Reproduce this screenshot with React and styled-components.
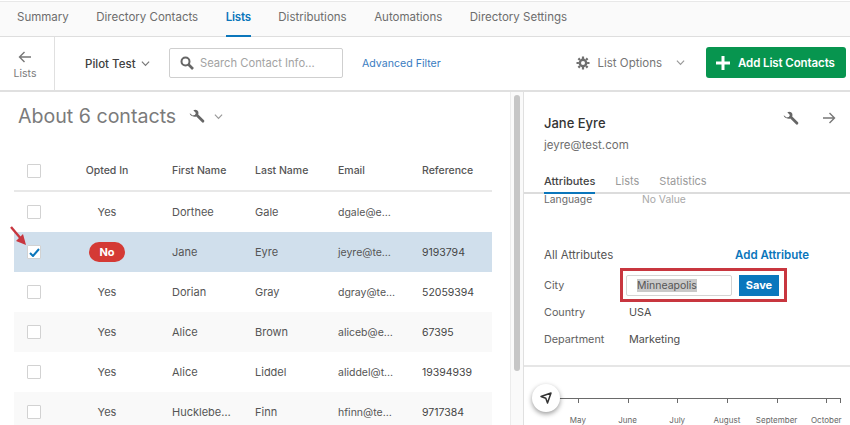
import React from 'react'
import styled, { createGlobalStyle } from 'styled-components'

const GlobalStyle = createGlobalStyle`
    html, body {
        margin: 0;
        padding: 0;
        height: 100%;
        background: #fff;
        overflow: hidden;
    }
    body {
        font-family: "Inter", "Noto Sans", sans-serif;
        color: #525252;
    }
    * {
        box-sizing: border-box;
    }
`;

const Page = styled.div`
    width: 850px;
    height: 425px;
    overflow: hidden;
    display: flex;
    flex-direction: column;
`;

const TabBar = styled.nav`
    flex: none;
    height: 36px;
    margin-top: 1px;
    padding-left: 17px;
    display: flex;
    gap: 27.5px;
    background: #fafafa;
    border-top: 1px solid #e8e8e8;
    border-bottom: 1px solid #dedede;
`;

const Tab = styled.a`
    display: flex;
    align-items: center;
    height: 35px;
    padding-bottom: 3px;
    font-size: 11.5px;
    letter-spacing: ${p => (p.$active ? '-0.2px' : '0')};
    color: ${p => (p.$active ? '#0b76bb' : '#6d6d6d')};
    font-weight: ${p => (p.$active ? 600 : 400)};
    border-bottom: 2px solid ${p => (p.$active ? '#0b76bb' : 'transparent')};
`;

const Toolbar = styled.div`
    flex: none;
    height: 55px;
    display: flex;
    align-items: center;
    border-bottom: 2px solid #e0e0e0;
`;

const BackCell = styled.div`
    width: 55px;
    height: 100%;
    flex: none;
    display: flex;
    flex-direction: column;
    align-items: center;
    padding: 13px 4px 0 0;
    gap: 3px;
    font-size: 10.5px;
    color: #7a7a7a;
    border-right: 1px solid #e0e0e0;
`;

const ListPicker = styled.div`
    margin-left: 30px;
    width: 84px;
    display: flex;
    align-items: center;
    gap: 5px;
    font-size: 11.5px;
    color: #404040;
    font-weight: 500;
    svg {
        flex: none;
    }
`;

const SearchBox = styled.div`
    width: 174px;
    height: 30px;
    margin-top: -1px;
    padding-left: 10px;
    display: flex;
    align-items: center;
    gap: 6px;
    font-size: 11.2px;
    color: #a3a3a3;
    border: 1px solid #cfcfcf;
    border-radius: 2px;
`;

const FilterLink = styled.a`
    margin-left: 19px;
    font-size: 10.6px;
    color: #3a7cc1;
`;

const OptionsMenu = styled.div`
    margin-left: auto;
    display: flex;
    align-items: center;
    font-size: 11.5px;
    color: #757575;
    margin-top: -2px;
    span {
        margin: 0 14px 0 8px;
    }
`;

const AddButton = styled.button`
    margin: -2px 4px 0 21px;
    width: 140px;
    height: 31px;
    padding: 0 0 0 10px;
    display: flex;
    align-items: center;
    gap: 8px;
    font: 600 11.5px "Inter", sans-serif;
    letter-spacing: -0.1px;
    color: #fff;
    background: #07954f;
    border: none;
    border-radius: 3px;
`;

const Workspace = styled.div`
    flex: 1;
    min-height: 0;
    display: flex;
`;

const ListPane = styled.section`
    position: relative;
    width: 510px;
    flex: none;
    overflow: hidden;
    padding: 0 18px 0 14px;
`;

const Heading = styled.div`
    height: 48px;
    margin-bottom: 11px;
    padding-left: 4px;
    display: flex;
    align-items: center;
    font-size: 19.6px;
    color: #7b7b7b;
    svg:first-of-type {
        margin-left: 13px;
    }
    svg:last-of-type {
        margin-left: 9px;
    }
`;

const Row = styled.div`
    display: grid;
    grid-template-columns: 40px 106px 83px 83px 84px 1fr;
    align-items: center;
    height: ${p => (p.$head ? '41px' : '40px')};
    font-size: ${p => (p.$head ? '10.5px' : '11px')};
    color: #555;
    font-weight: ${p => (p.$head ? 500 : 400)};
    background: ${p => p.$bg || 'transparent'};
    border-bottom: ${p => (p.$head ? '2px solid #e8e8e8' : 'none')};
`;

const Cell = styled.div`
    padding-left: 12px;
    white-space: nowrap;
    color: ${p => (p.$dark ? '#444' : 'inherit')};
    font-size: ${p => (p.$small ? '10.5px' : 'inherit')};
`;

const CenterCell = styled.div`
    display: flex;
    justify-content: center;
`;

const Check = styled.span`
    width: 14px;
    height: 14px;
    display: flex;
    align-items: center;
    justify-content: center;
    background: #fff;
    border: 1px solid #d2d2d2;
    border-radius: 1px;
`;

const NoPill = styled.span`
    width: 36px;
    height: 20px;
    display: flex;
    align-items: center;
    justify-content: center;
    font-size: 11px;
    font-weight: 700;
    color: #fff;
    background: #d43a35;
    border-radius: 10px;
`;

const RedArrow = styled.svg`
    position: absolute;
    left: 9px;
    top: 133px;
`;

const ScrollTrack = styled.div`
    width: 14px;
    flex: none;
    padding: 3px 3px 0 3px;
    background: #fafafa;
    border-left: 1px solid #ececec;
    border-right: 1px solid #e0e0e0;
`;

const ScrollThumb = styled.div`
    height: 276px;
    background: #c6c6c6;
    border-radius: 4px;
`;

const DetailPane = styled.aside`
    flex: 1;
    min-width: 0;
    display: flex;
    flex-direction: column;
    overflow: hidden;
`;

const DetailHead = styled.header`
    flex: none;
    height: 102px;
    padding: 22px 0 0 20px;
    position: relative;
    border-bottom: 2px solid #dcdcdc;
`;

const ContactName = styled.h2`
    margin: 0 0 5px;
    font-size: 13px;
    line-height: 18px;
    font-weight: 500;
    color: #333;
`;

const ContactMail = styled.div`
    font-size: 11.5px;
    line-height: 16px;
    color: #6e6e6e;
`;

const HeadActions = styled.div`
    position: absolute;
    top: 18px;
    right: 14px;
    display: flex;
    gap: 23px;
    align-items: center;
`;

const DetailTabs = styled.div`
    margin-top: 20px;
    display: flex;
    gap: 20px;
`;

const DetailTab = styled.a`
    height: 21px;
    font-size: 11px;
    line-height: 16px;
    color: ${p => (p.$active ? '#444' : '#9a9a9a')};
    font-weight: ${p => (p.$active ? 500 : 400)};
    border-bottom: 2px solid ${p => (p.$active ? '#0b76bb' : 'transparent')};
`;

const Attributes = styled.div`
    flex: none;
    height: 173px;
    overflow: hidden;
    padding: 0 21px 0 20px;
    border-bottom: 2px solid #e6e6e6;
`;

const ClippedRow = styled.div`
    margin-top: -3px;
    height: 16px;
    display: flex;
    font-size: 10.3px;
    line-height: 16px;
    color: #6a6a6a;
    span:first-child {
        width: 98px;
    }
    span:last-child {
        color: #a8a8a8;
    }
`;

const AttrHead = styled.div`
    margin-top: 40px;
    height: 16px;
    display: flex;
    justify-content: space-between;
    align-items: center;
    font-size: 11.5px;
    color: #555;
    padding-right: 20px;
    a {
        font-weight: 600;
        color: #0b76bb;
    }
`;

const AttrRow = styled.div`
    display: flex;
    align-items: center;
    font-size: 10.8px;
    height: ${p => (p.$edit ? '28px' : '27px')};
    margin-top: ${p => (p.$edit ? '8px' : '0')};
    color: #616161;
    b {
        font-weight: 400;
        color: #4d4d4d;
    }
`;

const AttrLabel = styled.div`
    width: ${p => p.$w || '85px'};
    flex: none;
`;

const EditBox = styled.div`
    display: flex;
    align-items: center;
    gap: 7px;
    width: 167px;
    height: 34px;
    flex: none;
    padding-left: 3px;
    border: 3px solid #c8363f;
`;

const EditInput = styled.div`
    width: 106px;
    height: 21px;
    padding-left: 10px;
    display: flex;
    align-items: center;
    font-size: 10.5px;
    border: 1px solid #d4d4d4;
    border-radius: 2px;
    span {
        background: #c9c9c9;
        color: #555;
    }
`;

const SaveButton = styled.button`
    width: 40px;
    height: 21px;
    padding: 0;
    font: 700 11px "Inter", sans-serif;
    color: #fff;
    background: #0a77bd;
    border: none;
`;

const Timeline = styled.div`
    position: relative;
    flex: 1;
    padding: 31px 0 0 29px;
`;

const CompassButton = styled.div`
    position: absolute;
    z-index: 1;
    left: 8px;
    top: 17px;
    width: 28px;
    height: 28px;
    display: flex;
    align-items: center;
    justify-content: center;
    background: #fff;
    border-radius: 50%;
    box-shadow: 0 2px 5px rgba(0, 0, 0, 0.4);
`;

const MonthAxis = styled.div`
    position: relative;
    display: flex;
    width: 288px;
    border-top: 1px solid #6a6a6a;
    &::after {
        content: '';
        position: absolute;
        top: 0;
        right: 0;
        width: 1px;
        height: 4px;
        background: #6a6a6a;
    }
`;

const Month = styled.div`
    position: relative;
    width: 49.7px;
    flex: none;
    padding-top: 16px;
    text-align: center;
    font-size: 8px;
    color: #666;
    white-space: nowrap;
    &::before {
        content: '';
        position: absolute;
        top: 0;
        left: 50%;
        width: 1px;
        height: 4px;
        background: #6a6a6a;
    }
`;

const Chevron = ({ color = '#777', size = 9 }) => (
    <svg width={size} height={size} viewBox="0 0 10 10" fill="none" stroke={color} strokeWidth="1.3">
        <path d="M1 3l4 4 4-4" />
    </svg>
)

const WrenchIcon = () => (
    <svg width="16" height="16" viewBox="0 0 16 16" fill="#666">
        <path d="M.8 5.2 3.6 7.4 5.9 7 6.9 4.9 4.3 2.3C6 1.2 8.6 1.7 9.3 3.8c.3 1 .2 1.9-.1 2.7l5.6 5.6c.7.7.7 1.5.1 2.1-.6.6-1.5.6-2.1-.1L7.3 8.5C6 9 4.4 8.8 3 8 1.6 7.1.6 6.3.8 5.2z" />
    </svg>
)

const ArrowIcon = ({ left, size = 14 }) => (
    <svg width={size} height={size} viewBox="0 0 14 14" fill="none" stroke="#777" strokeWidth="1.4">
        {left ? <path d="M13 7H1.5M6.5 2 1.5 7l5 5" /> : <path d="M1 7h11.5M7.5 2l5 5-5 5" />}
    </svg>
)

const SearchIcon = () => (
    <svg width="14" height="14" viewBox="0 0 14 14" fill="none" stroke="#666">
        <circle cx="5.5" cy="5.5" r="4" strokeWidth="2" />
        <path d="M8.5 8.5 13 13" strokeWidth="2.6" />
    </svg>
)

const GearIcon = () => (
    <svg width="14" height="14" viewBox="0 0 14 14" fill="none" stroke="#6f6f6f">
        <circle cx="7" cy="7" r="3.2" strokeWidth="2.4" />
        <path d="M7 .5v2.4M7 11.1v2.4M.5 7h2.4M11.1 7h2.4M2.4 2.4 4 4M10 10l1.6 1.6M11.6 2.4 10 4M4 10l-1.6 1.6" strokeWidth="2.2" />
    </svg>
)

const PlusIcon = () => (
    <svg width="14" height="14" viewBox="0 0 14 14" stroke="#fff" strokeWidth="3">
        <path d="M7 0v14M0 7h14" />
    </svg>
)

const CheckMark = () => (
    <svg width="11" height="9" viewBox="0 0 11 9" fill="none" stroke="#0b76bb" strokeWidth="2">
        <path d="M1 5l3 3 6-7" />
    </svg>
)

const CompassIcon = () => (
    <svg width="12" height="12" viewBox="0 0 12 12" fill="none" stroke="#333" strokeWidth="1.5" strokeLinejoin="round">
        <path d="M1 4.5 11 1 7.5 11 5.8 6.2z" />
    </svg>
)

const tabs = ['Summary', 'Directory Contacts', 'Lists', 'Distributions', 'Automations', 'Directory Settings']

const contacts = [
    { opted: 'Yes', first: 'Dorthee', last: 'Gale', email: 'dgale@e…', ref: '' },
    { opted: 'No', first: 'Jane', last: 'Eyre', email: 'jeyre@te…', ref: '9193794', bg: '#d0dfec', checked: true },
    { opted: 'Yes', first: 'Dorian', last: 'Gray', email: 'dgray@te…', ref: '52059394' },
    { opted: 'Yes', first: 'Alice', last: 'Brown', email: 'aliceb@e…', ref: '67395', bg: '#f9f9f9' },
    { opted: 'Yes', first: 'Alice', last: 'Liddel', email: 'aliddel@t…', ref: '19394939' },
    { opted: 'Yes', first: 'Hucklebe…', last: 'Finn', email: 'hfinn@te…', ref: '9717384', bg: '#f9f9f9' },
]

const months = ['May', 'June', 'July', 'August', 'September', 'October']

function App() {
    return (
        <Page>
            <GlobalStyle />
            <TabBar>
                {tabs.map(t => <Tab key={t} $active={t === 'Lists'}>{t}</Tab>)}
            </TabBar>
            <Toolbar>
                <BackCell>
                    <ArrowIcon left />
                    Lists
                </BackCell>
                <ListPicker>Pilot Test <Chevron /></ListPicker>
                <SearchBox><SearchIcon /> Search Contact Info...</SearchBox>
                <FilterLink>Advanced Filter</FilterLink>
                <OptionsMenu>
                    <GearIcon />
                    <span>List Options</span>
                    <Chevron color="#999" />
                </OptionsMenu>
                <AddButton><PlusIcon /> Add List Contacts</AddButton>
            </Toolbar>
            <Workspace>
                <ListPane>
                    <Heading>About 6 contacts <WrenchIcon /> <Chevron color="#999" /></Heading>
                    <Row $head>
                        <CenterCell><Check /></CenterCell>
                        <CenterCell>Opted In</CenterCell>
                        <Cell>First Name</Cell>
                        <Cell>Last Name</Cell>
                        <Cell>Email</Cell>
                        <Cell>Reference</Cell>
                    </Row>
                    {contacts.map(c => (
                        <Row key={c.email} $bg={c.bg}>
                            <CenterCell><Check>{c.checked && <CheckMark />}</Check></CenterCell>
                            <CenterCell>{c.opted === 'No' ? <NoPill>No</NoPill> : c.opted}</CenterCell>
                            <Cell>{c.first}</Cell>
                            <Cell>{c.last}</Cell>
                            <Cell $small>{c.email}</Cell>
                            <Cell $dark $small>{c.ref}</Cell>
                        </Row>
                    ))}
                    <RedArrow width="20" height="22" viewBox="0 0 20 22">
                        <path d="M2 2 13 15" stroke="#c8363f" strokeWidth="2.4" />
                        <path d="M17 20 7 16 14 9z" fill="#c8363f" />
                    </RedArrow>
                </ListPane>
                <ScrollTrack><ScrollThumb /></ScrollTrack>
                <DetailPane>
                    <DetailHead>
                        <ContactName>Jane Eyre</ContactName>
                        <ContactMail>jeyre@test.com</ContactMail>
                        <HeadActions><WrenchIcon /> <ArrowIcon /></HeadActions>
                        <DetailTabs>
                            <DetailTab $active>Attributes</DetailTab>
                            <DetailTab>Lists</DetailTab>
                            <DetailTab>Statistics</DetailTab>
                        </DetailTabs>
                    </DetailHead>
                    <Attributes>
                        <ClippedRow><span>Language</span><span>No Value</span></ClippedRow>
                        <AttrHead>All Attributes <a>Add Attribute</a></AttrHead>
                        <AttrRow $edit>
                            <AttrLabel $w="76px">City</AttrLabel>
                            <EditBox>
                                <EditInput><span>Minneapolis</span></EditInput>
                                <SaveButton>Save</SaveButton>
                            </EditBox>
                        </AttrRow>
                        <AttrRow><AttrLabel>Country</AttrLabel><b>USA</b></AttrRow>
                        <AttrRow><AttrLabel>Department</AttrLabel><b>Marketing</b></AttrRow>
                    </Attributes>
                    <Timeline>
                        <CompassButton><CompassIcon /></CompassButton>
                        <MonthAxis>
                            {months.map(m => <Month key={m}>{m}</Month>)}
                        </MonthAxis>
                    </Timeline>
                </DetailPane>
            </Workspace>
        </Page>
    )
}

export default App
